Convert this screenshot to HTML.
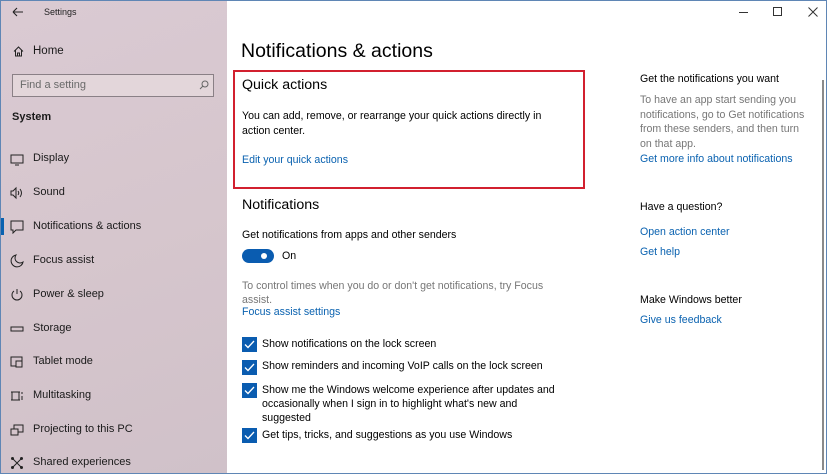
<!DOCTYPE html>
<html><head><meta charset="utf-8"><style>
*{margin:0;padding:0;box-sizing:border-box}
body{width:827px;height:474px;overflow:hidden;font-family:"Liberation Sans",sans-serif;background:#fff;position:relative;color:#000}
.side{position:absolute;left:0;top:0;width:227px;height:474px;background:linear-gradient(160deg,#dacad3 0%,#d6c6cd 50%,#d0c1c9 100%);border-left:1px solid #5f86b5}
.a{position:absolute;white-space:nowrap}
.nav{position:absolute;left:33px;font-size:11px;color:#1a1a1a}
.ic{position:absolute;left:10px;width:14px;height:14px}
.t{font-size:10.6px;color:#000}
.g{font-size:10.6px;color:#777}
.l{font-size:10.6px;color:#0a62b0}
.cb{position:absolute;left:242px;width:15px;height:15px;background:#0a5cb0}
.cb svg{position:absolute;left:2px;top:3px}
</style></head><body>
<div class="side"></div>
<div style="position:absolute;top:0;left:0;width:827px;height:1px;background:#5f86b5"></div>
<div style="position:absolute;top:473px;left:0;width:827px;height:1px;background:#5f86b5"></div>
<div style="position:absolute;top:0;right:0;width:1px;height:474px;background:#5f86b5"></div>
<div style="position:absolute;top:80px;right:3px;width:2px;height:390px;background:#8a8a8a"></div>
<svg class="a" style="left:12px;top:7px" width="12" height="10"><path d="M1 5H11M1 5L5 1M1 5L5 9" stroke="#222" fill="none" stroke-width="1.1"/></svg>
<div class="a" style="left:44px;top:7px;font-size:9px;color:#222">Settings</div>
<svg class="a" style="left:13px;top:46px" width="11" height="11"><path d="M1 5.5L5.5 1L10 5.5M2.5 4V10H8.5V4M4.5 10V7H6.5V10" stroke="#222" fill="none"/></svg>
<div class="a" style="left:33px;top:45px;font-size:11.5px;color:#1a1a1a">Home</div>
<div class="a" style="left:12px;top:74px;width:202px;height:23px;border:1px solid #8a8086;background:#e3d6da"></div>
<div class="a" style="left:20px;top:79px;font-size:11px;color:#6a6a6a">Find a setting</div>
<svg class="a" style="left:199px;top:80px" width="10" height="10"><circle cx="6" cy="4" r="3" stroke="#666" fill="none"/><path d="M4 6L1 9" stroke="#666"/></svg>
<div class="a" style="left:12px;top:111px;font-size:11px;font-weight:bold;color:#1a1a1a">System</div>
<div style="position:absolute;left:1px;top:218px;width:3px;height:17px;background:#0a62b0"></div>
<svg class="ic" style="top:153px" viewBox="0 0 14 14"><rect x="1" y="2" width="12" height="8" stroke="#222" fill="none"/><path d="M5 12H9" stroke="#222"/></svg>
<div class="nav" style="top:152px">Display</div>
<svg class="ic" style="top:186px" viewBox="0 0 14 14"><path d="M1 5H3L6 2V12L3 9H1Z" stroke="#222" fill="none"/><path d="M8 5Q9.5 7 8 9M10 3Q13 7 10 11" stroke="#222" fill="none"/></svg>
<div class="nav" style="top:186px">Sound</div>
<svg class="ic" style="top:220px" viewBox="0 0 14 14"><path d="M1 1H13V10H6L3 13V10H1Z" stroke="#222" fill="none"/></svg>
<div class="nav" style="top:220px">Notifications &amp; actions</div>
<svg class="ic" style="top:254px" viewBox="0 0 14 14"><path d="M6 1A6 6 0 1 0 13 8A5 5 0 0 1 6 1Z" stroke="#222" fill="none"/></svg>
<div class="nav" style="top:254px">Focus assist</div>
<svg class="ic" style="top:288px" viewBox="0 0 14 14"><path d="M4 3A5 5 0 1 0 10 3M7 1V6" stroke="#222" fill="none"/></svg>
<div class="nav" style="top:288px">Power &amp; sleep</div>
<svg class="ic" style="top:322px" viewBox="0 0 14 14"><rect x="1" y="5" width="12" height="4" stroke="#222" fill="none"/></svg>
<div class="nav" style="top:322px">Storage</div>
<svg class="ic" style="top:355px" viewBox="0 0 14 14"><rect x="1" y="2" width="11" height="9" stroke="#222" fill="none"/><rect x="6" y="6" width="6" height="6" stroke="#222" fill="#d5c5cc"/></svg>
<div class="nav" style="top:355px">Tablet mode</div>
<svg class="ic" style="top:389px" viewBox="0 0 14 14"><rect x="2" y="3" width="7" height="8" stroke="#222" fill="none"/><path d="M1 3H10M1 11H10M12 3V5M12 7V11" stroke="#222"/></svg>
<div class="nav" style="top:389px">Multitasking</div>
<svg class="ic" style="top:423px" viewBox="0 0 14 14"><rect x="4" y="2" width="9" height="7" stroke="#222" fill="none"/><rect x="1" y="6" width="7" height="6" stroke="#222" fill="#d5c5cc"/></svg>
<div class="nav" style="top:423px">Projecting to this PC</div>
<svg class="ic" style="top:456px" viewBox="0 0 14 14"><path d="M2 2L12 12M12 2L2 12" stroke="#222"/><circle cx="2.5" cy="2.5" r="1.5" fill="#222"/><circle cx="11.5" cy="11.5" r="1.5" fill="#222"/><circle cx="11.5" cy="2.5" r="1.5" fill="#222"/><circle cx="2.5" cy="11.5" r="1.5" fill="#222"/></svg>
<div class="nav" style="top:456px">Shared experiences</div>

<div class="a" style="left:739px;top:12px;width:9px;height:1px;background:#333"></div>
<div class="a" style="left:773px;top:7px;width:9px;height:9px;border:1px solid #333"></div>
<svg class="a" style="left:808px;top:7px" width="10" height="10"><path d="M0.5 0.5L9.5 9.5M9.5 0.5L0.5 9.5" stroke="#333"/></svg>

<div class="a" style="left:241px;top:40px;font-size:19.5px;color:#000">Notifications &amp; actions</div>
<div class="a" style="left:233px;top:70px;width:352px;height:119px;border:2px solid #d2202f"></div>
<div class="a" style="left:242px;top:77px;font-size:14.2px">Quick actions</div>
<div class="a t" style="left:242px;top:109px;line-height:15px">You can add, remove, or rearrange your quick actions directly in<br>action center.</div>
<div class="a l" style="left:242px;top:154px">Edit your quick actions</div>
<div class="a" style="left:242px;top:197px;font-size:14.2px">Notifications</div>
<div class="a t" style="left:242px;top:229px">Get notifications from apps and other senders</div>
<div class="a" style="left:242px;top:249px;width:32px;height:14px;border-radius:7px;background:#0a5cb0"></div>
<div class="a" style="left:261px;top:253px;width:6px;height:6px;border-radius:3px;background:#fff"></div>
<div class="a t" style="left:282px;top:250px">On</div>
<div class="a g" style="left:242px;top:279px;line-height:14px">To control times when you do or don't get notifications, try Focus<br>assist.</div>
<div class="a l" style="left:242px;top:306px">Focus assist settings</div>
<div class="cb" style="top:337px"><svg width="11" height="9"><path d="M1 4.5L4 7.5L10 1" stroke="#fff" fill="none" stroke-width="1.3"/></svg></div>
<div class="a t" style="left:262px;top:338px">Show notifications on the lock screen</div>
<div class="cb" style="top:360px"><svg width="11" height="9"><path d="M1 4.5L4 7.5L10 1" stroke="#fff" fill="none" stroke-width="1.3"/></svg></div>
<div class="a t" style="left:262px;top:360px">Show reminders and incoming VoIP calls on the lock screen</div>
<div class="cb" style="top:383px"><svg width="11" height="9"><path d="M1 4.5L4 7.5L10 1" stroke="#fff" fill="none" stroke-width="1.3"/></svg></div>
<div class="a t" style="left:262px;top:383px;line-height:14px">Show me the Windows welcome experience after updates and<br>occasionally when I sign in to highlight what's new and<br>suggested</div>
<div class="cb" style="top:428px"><svg width="11" height="9"><path d="M1 4.5L4 7.5L10 1" stroke="#fff" fill="none" stroke-width="1.3"/></svg></div>
<div class="a t" style="left:262px;top:429px">Get tips, tricks, and suggestions as you use Windows</div>

<div class="a t" style="left:640px;top:73px">Get the notifications you want</div>
<div class="a g" style="left:640px;top:93px;line-height:14.5px">To have an app start sending you<br>notifications, go to Get notifications<br>from these senders, and then turn<br>on that app.</div>
<div class="a l" style="left:640px;top:153px">Get more info about notifications</div>
<div class="a t" style="left:640px;top:201px">Have a question?</div>
<div class="a l" style="left:640px;top:226px">Open action center</div>
<div class="a l" style="left:640px;top:246px">Get help</div>
<div class="a t" style="left:640px;top:294px">Make Windows better</div>
<div class="a l" style="left:640px;top:314px">Give us feedback</div>
</body></html>
